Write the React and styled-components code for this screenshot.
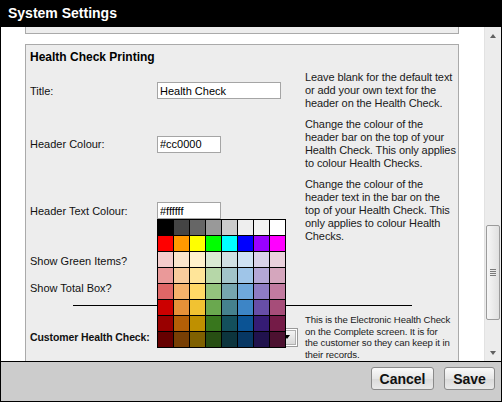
import React from 'react';
import styled, { createGlobalStyle } from 'styled-components';

const GlobalStyle = createGlobalStyle`
  html, body {
    margin: 0;
    padding: 0;
    background: #fff;
  }
  body {
    font-family: "Liberation Sans", Arial, sans-serif;
  }
`;

const PALETTE = [
  ['#000000', '#444444', '#666666', '#999999', '#cccccc', '#eeeeee', '#f3f3f3', '#ffffff'],
  ['#ff0000', '#ff9900', '#ffff00', '#00ff00', '#00ffff', '#0000ff', '#9900ff', '#ff00ff'],
  ['#f4cccc', '#fce5cd', '#fff2cc', '#d9ead3', '#d0e0e3', '#cfe2f3', '#d9d2e9', '#ead1dc'],
  ['#ea9999', '#f9cb9c', '#ffe599', '#b6d7a8', '#a2c4c9', '#9fc5e8', '#b4a7d6', '#d5a6bd'],
  ['#e06666', '#f6b26b', '#ffd966', '#93c47d', '#76a5af', '#6fa8dc', '#8e7cc3', '#c27ba0'],
  ['#cc0000', '#e69138', '#f1c232', '#6aa84f', '#45818e', '#3d85c6', '#674ea7', '#a64d79'],
  ['#990000', '#b45f06', '#bf9000', '#38761d', '#134f5c', '#0b5394', '#351c75', '#741b47'],
  ['#660000', '#783f04', '#7f6000', '#274e13', '#0c343d', '#073763', '#20124d', '#4c1130'],
];

const Window = styled.div`
  width: 502px;
  height: 402px;
  box-sizing: border-box;
  border: 1px solid #000;
  border-top: none;
  display: flex;
  flex-direction: column;
  background: #fff;
  overflow: hidden;
`;

const TitleBar = styled.div`
  height: 27px;
  flex: none;
  margin: 0 -1px;
  background: #000;
  color: #fff;
  font-weight: bold;
  font-size: 14px;
  line-height: 27px;
  padding-left: 8px;
`;

const Body = styled.div`
  flex: 1;
  display: flex;
  min-height: 0;
`;

const Main = styled.div`
  flex: 1;
  overflow: hidden;
  padding: 0 25px 0 24px;
`;

const PrevBox = styled.div`
  height: 6px;
  background: #ededed;
  border: 1px solid #aaa;
  border-top: none;
  margin-bottom: 10px;
`;

const Box = styled.div`
  background: #ededed;
  border: 1px solid #aaa;
  padding: 5px 4px 20px 4px;
`;

const Heading = styled.div`
  font-weight: bold;
  font-size: 12px;
  line-height: 14px;
  color: #000;
  margin-bottom: 7px;
`;

const Form = styled.div`
  display: grid;
  grid-template-columns: 127px 148px 1fr;
  row-gap: 8px;
  align-items: center;
`;

const Label = styled.div`
  font-size: ${(p) => (p.$bold ? '10.5px' : '11px')};
  color: #111;
  font-weight: ${(p) => (p.$bold ? 'bold' : 'normal')};
  letter-spacing: ${(p) => (p.$bold ? '-0.1px' : '0')};
  white-space: nowrap;
  min-height: ${(p) => (p.$tall ? '19px' : '0')};
  display: flex;
  align-items: center;
`;

const Field = styled.div`
  position: relative;
  display: flex;
  align-items: center;
`;

const TextInput = styled.input`
  box-sizing: border-box;
  width: ${(p) => p.$w}px;
  height: 17px;
  border: 1px solid #a5a5a5;
  background: #fff;
  font-family: "Liberation Sans", Arial, sans-serif;
  font-size: 11px;
  padding: 0 2px;
  margin: 0;
  color: #000;
  outline: none;
`;

const Help = styled.div`
  font-size: ${(p) => (p.$small ? '9.6px' : '11px')};
  line-height: ${(p) => (p.$small ? '11.5px' : '13px')};
  color: #1a1a1a;
  white-space: nowrap;
  letter-spacing: -0.1px;
`;

const Palette = styled.div`
  position: absolute;
  top: 17px;
  left: 0;
  z-index: 10;
  display: grid;
  grid-template-columns: repeat(8, 15px);
  grid-auto-rows: 15px;
  gap: 1px;
  padding: 1px;
  background: #000;
`;

const Swatch = styled.div`
  background: ${(p) => p.$c};
`;

const Rule = styled.div`
  grid-column: 1 / -1;
  width: 339px;
  height: 1px;
  background: #000;
  margin: 0 auto;
`;

const Select = styled.div`
  box-sizing: border-box;
  width: 141px;
  height: 19px;
  border: 1px solid #999;
  background: #fff;
  display: flex;
  justify-content: flex-end;
  padding: 1px;
`;

const SelectButton = styled.div`
  width: 15px;
  background: linear-gradient(#f4f4f4, #d8d8d8);
  border: 1px solid #b0b0b0;
  box-sizing: border-box;
  display: flex;
  align-items: center;
  justify-content: flex-start;
  padding-left: 2px;
  &::after {
    content: '';
    border-left: 3px solid transparent;
    border-right: 3px solid transparent;
    border-top: 4px solid #000;
  }
`;

const Scrollbar = styled.div`
  width: 16px;
  flex: none;
  background: #ececec;
  border-left: 1px solid #e2e2e2;
  display: flex;
  flex-direction: column;
`;

const Arrow = styled.div`
  height: 17px;
  flex: none;
  display: flex;
  align-items: center;
  justify-content: center;
  &::after {
    content: '';
    border-left: 3.5px solid transparent;
    border-right: 3.5px solid transparent;
    ${(p) => (p.$down ? 'border-top: 4px solid #606060;' : 'border-bottom: 4px solid #606060;')}
  }
`;

const Track = styled.div`
  flex: 1;
  padding-top: 181px;
`;

const Thumb = styled.div`
  height: 95px;
  margin: 0 1px;
  box-sizing: border-box;
  border: 1px solid #9b9b9b;
  border-radius: 2px;
  background: linear-gradient(to right, #f6f6f6, #e0e0e0);
  display: flex;
  flex-direction: column;
  align-items: center;
  justify-content: center;
  gap: 1px;
`;

const Grip = styled.div`
  width: 6px;
  height: 1px;
  background: #7a7a7a;
`;

const Footer = styled.div`
  height: 34px;
  flex: none;
  border-top: 1px solid #000;
  background: #cccccc;
  display: flex;
  justify-content: flex-end;
  align-items: flex-start;
  gap: 10px;
  padding: 5px 6px 0 0;
`;

const Button = styled.button`
  box-sizing: border-box;
  height: 23px;
  width: ${(p) => p.$w}px;
  padding: 0;
  border: 1px solid #8a8a8a;
  border-radius: 3px;
  background: linear-gradient(#fafafa, #e6e6e6 50%, #dadada 51%, #e9e9e9);
  font-family: "Liberation Sans", Arial, sans-serif;
  font-weight: bold;
  font-size: 14px;
  color: #111;
`;

export default function App() {
  return (
    <>
      <GlobalStyle />
      <Window>
        <TitleBar>System Settings</TitleBar>
        <Body>
          <Main>
            <PrevBox />
            <Box>
              <Heading>Health Check Printing</Heading>
              <Form>
                <Label>Title:</Label>
                <Field>
                  <TextInput $w={124} defaultValue="Health Check" />
                </Field>
                <Help>
                  Leave blank for the default text<br />
                  or add your own text for the<br />
                  header on the Health Check.
                </Help>

                <Label>Header Colour:</Label>
                <Field>
                  <TextInput $w={64} defaultValue="#cc0000" />
                </Field>
                <Help>
                  Change the colour of the<br />
                  header bar on the top of your<br />
                  Health Check. This only applies<br />
                  to colour Health Checks.
                </Help>

                <Label>Header Text Colour:</Label>
                <Field>
                  <TextInput $w={64} defaultValue="#ffffff" />
                  <Palette>
                    {PALETTE.flat().map((c, i) => (
                      <Swatch key={i} $c={c} />
                    ))}
                  </Palette>
                </Field>
                <Help>
                  Change the colour of the<br />
                  header text in the bar on the<br />
                  top of your Health Check. This<br />
                  only applies to colour Health<br />
                  Checks.
                </Help>

                <Label $tall>Show Green Items?</Label>
                <Field />
                <Help />

                <Label $tall>Show Total Box?</Label>
                <Field />
                <Help />

                <Rule />

                <Label $bold>Customer Health Check:</Label>
                <Field>
                  <Select>
                    <SelectButton />
                  </Select>
                </Field>
                <Help $small>
                  This is the Electronic Health Check<br />
                  on the Complete screen. It is for<br />
                  the customer so they can keep it in<br />
                  their records.
                </Help>
              </Form>
            </Box>
          </Main>
          <Scrollbar>
            <Arrow />
            <Track>
              <Thumb>
                <Grip />
                <Grip />
                <Grip />
                <Grip />
              </Thumb>
            </Track>
            <Arrow $down />
          </Scrollbar>
        </Body>
        <Footer>
          <Button $w={63}>Cancel</Button>
          <Button $w={51}>Save</Button>
        </Footer>
      </Window>
    </>
  );
}
